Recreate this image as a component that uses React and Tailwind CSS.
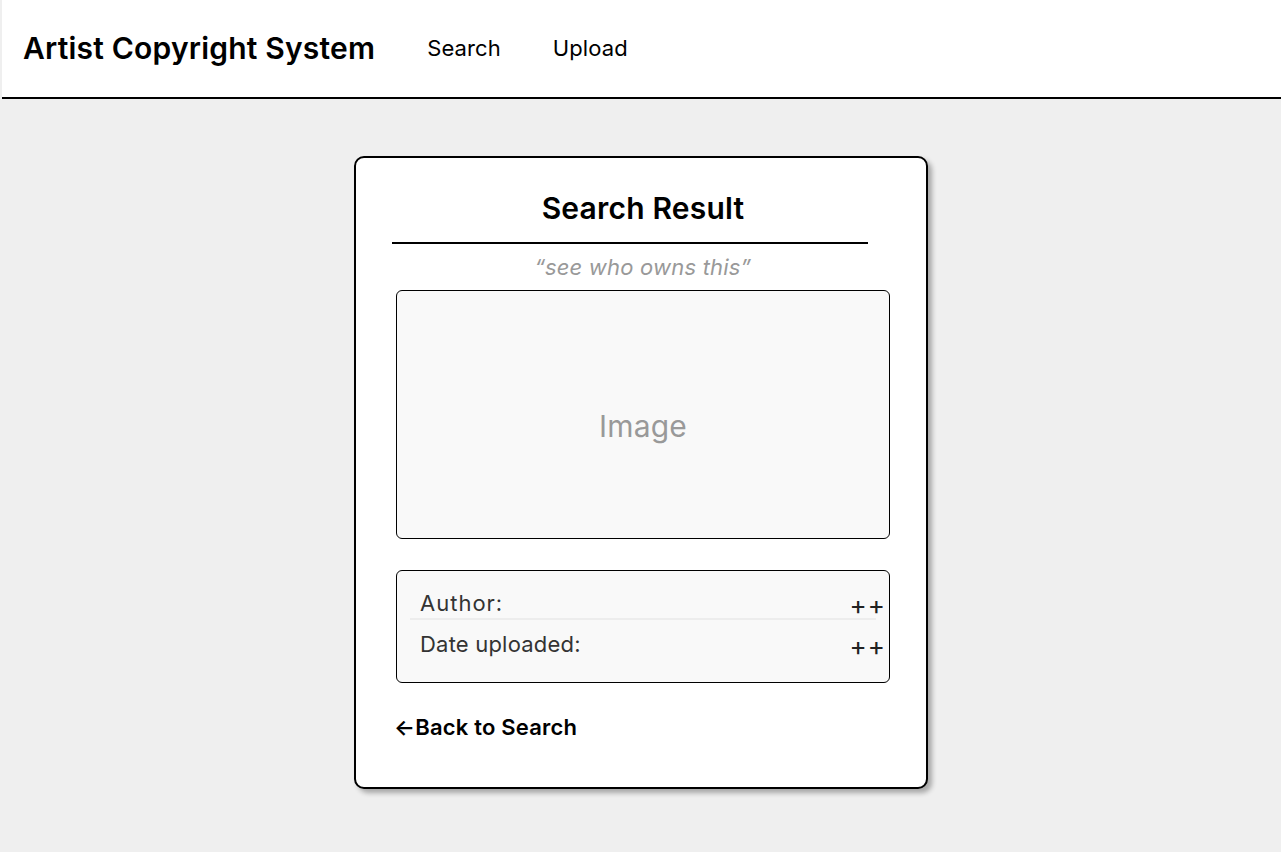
export default function App() {
  return (
    <div className="w-[1283px] h-[854px] bg-white font-['Inter',sans-serif]">
      <div className="w-[1281px] h-[852px] bg-[#efefef] flex flex-col">
        {/* Header */}
        <header className="h-[99px] bg-white border-b-2 border-black flex items-center pl-[21px] ml-[2px]">
          <h1 className="text-[30px] font-semibold text-black tracking-[0.2px]">Artist Copyright System</h1>
          <nav className="flex items-center ml-[52px] gap-[52px] text-[22px] text-black tracking-[0.1px]">
            <a>Search</a>
            <a>Upload</a>
          </nav>
        </header>

        {/* Result card */}
        <div className="flex justify-center pt-[57px] pl-[1px]">
          <div className="w-[574px] h-[633px] bg-white border-2 border-black rounded-[10px] shadow-[4px_4px_5px_rgba(0,0,0,0.3)] flex flex-col">
            <h2 className="text-[30px] font-semibold text-black text-center mt-[32px] leading-[36px] tracking-[0.2px] pl-[4px]">Search Result</h2>
            <div className="ml-[36px] mt-[16px] w-[476px] h-[2px] bg-black" />
            <p className="text-[22px] italic text-[#999] text-center mt-[10px] leading-[26px] tracking-[0.2px] pl-[4px]">“see who owns this”</p>
            <div className="ml-[40px] mt-[10px] w-[494px] h-[249px] bg-[#f9f9f9] border border-black rounded-[6px] flex items-center justify-center pt-[24px]">
              <span className="text-[30px] text-[#999] tracking-[0.2px]">Image</span>
            </div>
            <div className="ml-[40px] mt-[31px] w-[494px] h-[113px] bg-[#f9f9f9] border border-black rounded-[6px] flex flex-col pt-[20px]">
              <div className="flex justify-between pl-[23px] pr-[3px]">
                <span className="text-[22px] text-[#333] leading-[24px] tracking-[1px]">Author:</span>
                <span className="text-[26px] text-[#222] leading-[24px] mt-[2px] tracking-[1px]">++</span>
              </div>
              <div className="mx-[13px] mt-[1px] h-[2px] bg-[#ededed]" />
              <div className="flex justify-between pl-[23px] pr-[3px] mt-[12px]">
                <span className="text-[22px] text-[#333] leading-[24px] tracking-[0.2px]">Date uploaded:</span>
                <span className="text-[26px] text-[#222] leading-[24px] mt-[2px] tracking-[1px]">++</span>
              </div>
            </div>
            <a className="ml-[38px] mt-[32px] text-[22px] font-semibold text-black leading-[24px] tracking-[0.2px]">←Back to Search</a>
          </div>
        </div>
      </div>
    </div>
  );
}
